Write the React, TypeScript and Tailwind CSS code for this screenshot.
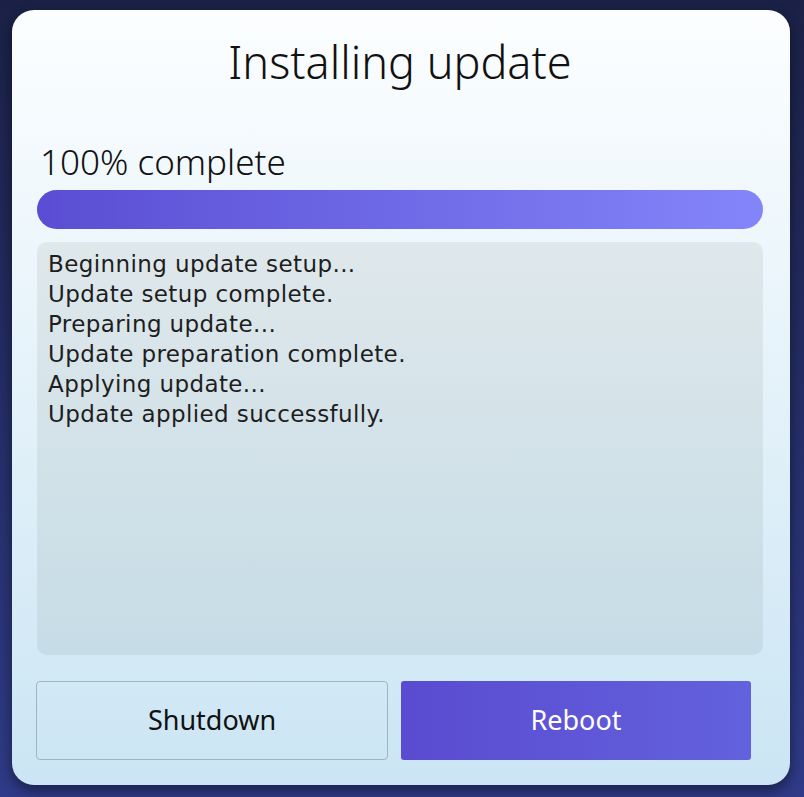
import React from 'react';

const logLines = [
  'Beginning update setup...',
  'Update setup complete.',
  'Preparing update...',
  'Update preparation complete.',
  'Applying update...',
  'Update applied successfully.'
];

export default function App() {
  return (
    <div className="h-[797px] w-[804px] overflow-hidden bg-gradient-to-b from-[#1b2146] to-[#2f3b88] pl-[12px] pt-[10px]">
      <div
        className="flex h-[775px] w-[778px] flex-col rounded-[22px] bg-gradient-to-b from-[#fcfeff] to-[#cbe5f4] pl-[25px] pr-[27px] shadow-[0_6px_14px_rgba(0,0,0,0.45)]"
        style={{ fontFamily: '"Noto Sans", "Open Sans", sans-serif' }}
      >
        <h1 className="mt-[30px] text-center text-[45px] leading-[44px] font-light text-[#111]">
          Installing update
        </h1>
        <p className="mt-[60px] pl-[3px] text-[35px] leading-[35px] font-light text-[#111]">
          100% complete
        </p>
        <div className="mt-[11px] h-[39px] rounded-full bg-gradient-to-r from-[#5a4dd3] to-[#8585fa]" />
        <div
          className="mt-[13px] h-[413px] rounded-[10px] bg-gradient-to-b from-[#dfe8eb] to-[#c6dce6] pl-[11px] pt-[7px] text-[23px] leading-[30px] tracking-[0.4px] text-[#1e1e1e]"
          style={{ fontFamily: '"DejaVu Sans", "Noto Sans", sans-serif' }}
        >
          {logLines.map((line) => (
            <div key={line}>{line}</div>
          ))}
        </div>
        <div className="mt-[26px] flex gap-[13px]">
          <button className="-ml-[1px] flex h-[79px] w-[352px] items-center justify-center rounded-[4px] border-[1.5px] border-[#9eb4c1] text-[27px] text-[#111]">
            Shutdown
          </button>
          <button className="flex h-[79px] w-[350px] items-center justify-center rounded-[3px] bg-gradient-to-r from-[#5a4bd0] to-[#6361dd] text-[27px] text-white">
            Reboot
          </button>
        </div>
      </div>
    </div>
  );
}
